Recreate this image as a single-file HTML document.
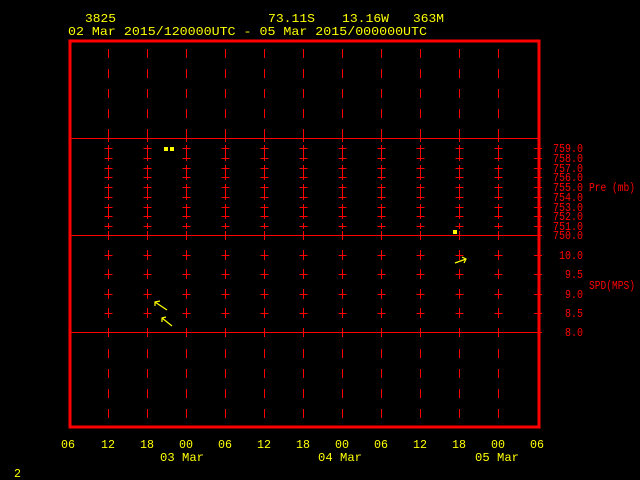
<!DOCTYPE html>
<html><head><meta charset="utf-8"><style>
html,body{margin:0;padding:0;background:#000;width:640px;height:480px;overflow:hidden}
svg{display:block}
text{font-family:"Liberation Mono","DejaVu Sans Mono",monospace}
</style></head><body>
<svg id="s" width="640" height="480" xmlns="http://www.w3.org/2000/svg" shape-rendering="crispEdges">
<rect width="640" height="480" fill="#000"/>
<g fill="#ffff00" font-size="12">
<text x="85" y="22" textLength="31" lengthAdjust="spacingAndGlyphs">3825</text>
<text x="268" y="22" textLength="47" lengthAdjust="spacingAndGlyphs">73.11S</text>
<text x="342" y="22" textLength="47" lengthAdjust="spacingAndGlyphs">13.16W</text>
<text x="413" y="22" textLength="31" lengthAdjust="spacingAndGlyphs">363M</text>
<text x="68" y="35" textLength="359" lengthAdjust="spacingAndGlyphs">02 Mar 2015/120000UTC - 05 Mar 2015/000000UTC</text>
</g>
<g id="grid" stroke="#ff0000" stroke-width="1" fill="none"></g>
<rect x="70" y="41" width="469" height="386" fill="none" stroke="#ff0000" stroke-width="3"/>
<g fill="#ff0000" font-size="12" id="rl">
<text x="589" y="191" textLength="46" lengthAdjust="spacingAndGlyphs">Pre (mb)</text>
<text x="589" y="289" textLength="46" lengthAdjust="spacingAndGlyphs">SPD(MPS)</text>
</g>
<g fill="#ffff00" font-size="12" id="bl">
<text x="61" y="448" textLength="14" lengthAdjust="spacingAndGlyphs">06</text>
<text x="530" y="448" textLength="14" lengthAdjust="spacingAndGlyphs">06</text>
<text x="160" y="461" textLength="44" lengthAdjust="spacingAndGlyphs">03 Mar</text>
<text x="318" y="461" textLength="44" lengthAdjust="spacingAndGlyphs">04 Mar</text>
<text x="475" y="461" textLength="44" lengthAdjust="spacingAndGlyphs">05 Mar</text>
<text x="14" y="477" textLength="7" lengthAdjust="spacingAndGlyphs">2</text>
</g>
<g fill="#ffff00">
<rect x="164" y="147" width="4" height="4"/><rect x="170" y="147" width="4" height="4"/>
<rect x="453" y="230" width="4" height="4"/>
</g>
<g stroke="#ffff00" stroke-width="1.2" fill="none" shape-rendering="auto">
<polyline points="167,310 155,302"/><polyline points="155,306 155,302 160,301"/>
<polyline points="172,326 162,318"/><polyline points="162,322 162,318 166,317"/>
<polyline points="455,263 466,259"/><polyline points="462,257 466,259 464,263"/>
</g>
</svg>
<script>
var NS="http://www.w3.org/2000/svg",g=document.getElementById("grid");
function L(x1,y1,x2,y2){var l=document.createElementNS(NS,"line");l.setAttribute("x1",x1);l.setAttribute("y1",y1);l.setAttribute("x2",x2);l.setAttribute("y2",y2);g.appendChild(l);}
var xs=[];for(var i=1;i<=11;i++)xs.push(69+39*i);
L(70,138.5,538,138.5);L(70,235.5,538,235.5);L(70,332.5,538,332.5);
xs.forEach(function(x){x+=.5;
 for(var y=49;y<420;y+=20){ if(y>138&&y<330)continue; L(x,y,x,y+9);}
 L(x,134,x,142);
 var pl=[148,158,168,177,187,197,207,216,226];
 for(var k=0;k<pl.length;k+=2){L(x,pl[k]-3,x,(pl[k+1]||pl[k])+3);}
 pl.forEach(function(y){L(x-4,y+.5,x+4,y+.5);});
 L(x,231,x,240);
 [255,274,294,313].forEach(function(y){L(x,y-5,x,y+5);L(x-4,y+.5,x+4,y+.5);});
 L(x,328,x,337);
});
var rl=document.getElementById("rl");
var pv=["759.0","758.0","757.0","756.0","755.0","754.0","753.0","752.0","751.0","750.0"],py=[148,158,168,177,187,197,207,216,226,235];
function T(p,x,y,s,w){var t=document.createElementNS(NS,"text");t.setAttribute("x",x);t.setAttribute("y",y);t.setAttribute("textLength",w);t.setAttribute("lengthAdjust","spacingAndGlyphs");t.textContent=s;p.appendChild(t);}
pv.forEach(function(s,i){T(rl,553,py[i]+4,s,30);L(534,py[i]+.5,542,py[i]+.5);});
[["10.0",255],["9.5",274],["9.0",294],["8.5",313],["8.0",332]].forEach(function(a){T(rl,583-a[0].length*6,a[1]+4,a[0],a[0].length*6);L(534,a[1]+.5,542,a[1]+.5);});
var bl=document.getElementById("bl"),tl=["12","18","00","06","12","18","00","06","12","18","00"];
tl.forEach(function(s,i){T(bl,xs[i]-7,448,s,14);});
</script>
</body></html>
